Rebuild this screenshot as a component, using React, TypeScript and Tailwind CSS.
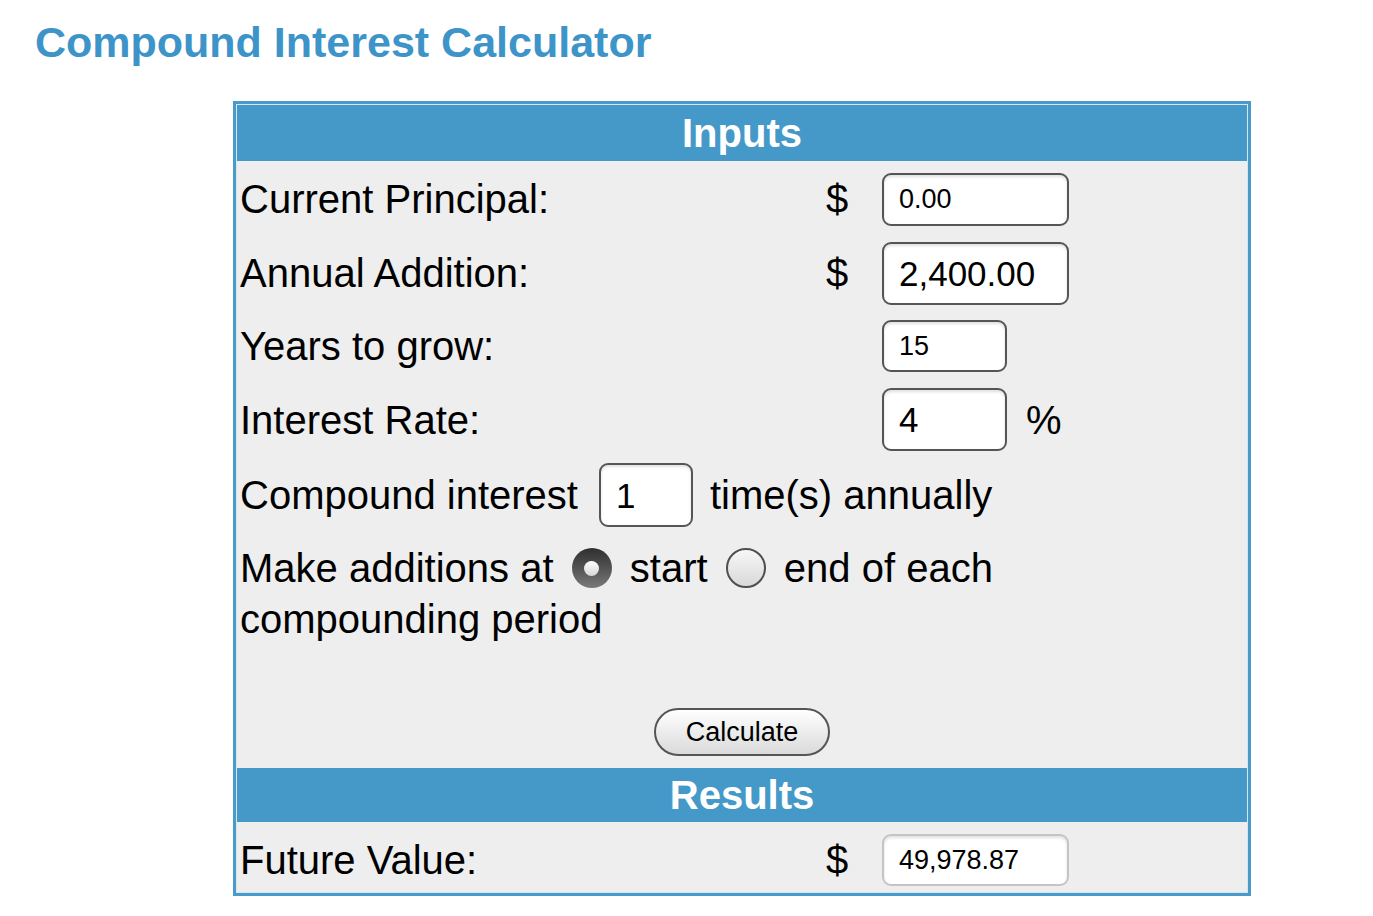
import React from 'react';

const font = { fontFamily: '"Liberation Sans", Arial, Helvetica, sans-serif' };

const Field = ({ value, w, h, big, light }: { value: string; w: string; h: string; big?: boolean; light?: boolean }) => (
  <div
    className={`${w} ${h} flex items-center pl-[15px] bg-white rounded-[9px] border-2 ${light ? 'border-[#c4c4c4]' : 'border-[#555555]'} shadow-[inset_0_2px_3px_rgba(0,0,0,0.12)] ${big ? 'text-[35px]' : 'text-[27px]'} text-black`}
  >
    {value}
  </div>
);

const Radio = ({ checked }: { checked?: boolean }) =>
  checked ? (
    <span className="inline-flex align-middle mx-[7px] mb-[6px] w-[40px] h-[40px] rounded-full bg-gradient-to-b from-[#2f2f2f] to-[#7a7a7a] items-center justify-center">
      <span className="w-[15px] h-[15px] rounded-full bg-gradient-to-b from-white to-[#d6d6d6]" />
    </span>
  ) : (
    <span className="inline-block align-middle mx-[7px] mb-[6px] w-[40px] h-[40px] rounded-full border-2 border-[#4f4f4f] bg-gradient-to-b from-[#f7f7f7] to-[#d9d9d9]" />
  );

const Row = ({ label, h, children, dollar, pct }: { label: string; h: string; children: React.ReactNode; dollar?: boolean; pct?: boolean }) => (
  <div className={`flex items-center ${h}`}>
    <div className="w-[589px] pl-[3px]">{label}</div>
    <div className="w-[56px]">{dollar ? '$' : ''}</div>
    {children}
    {pct && <div className="ml-[19px]">%</div>}
  </div>
);

export default function App() {
  return (
    <div className="min-h-screen bg-white text-black" style={font}>
      <h1 className="pl-[35px] pt-[21px] text-[43px] leading-none font-bold text-[#3d94c8]">
        Compound Interest Calculator
      </h1>

      <div className="ml-[233px] mt-[37px] w-[1018px] border-[3px] border-[#4a9bc9]">
        <div className="border border-[#d3e6f1] bg-[#eeeeee] text-[40px] leading-none">
          <div className="h-[56px] bg-[#4599c8] flex items-center justify-center text-white font-bold">
            Inputs
          </div>

          <Row label="Current Principal:" h="h-[76px]" dollar>
            <Field value="0.00" w="w-[187px]" h="h-[53px]" />
          </Row>
          <Row label="Annual Addition:" h="h-[72px]" dollar>
            <Field value="2,400.00" w="w-[187px]" h="h-[63px]" big />
          </Row>
          <Row label="Years to grow:" h="h-[74px]">
            <Field value="15" w="w-[125px]" h="h-[52px]" />
          </Row>
          <Row label="Interest Rate:" h="h-[73px]" pct>
            <Field value="4" w="w-[125px]" h="h-[63px]" big />
          </Row>

          <div className="flex items-center h-[78px] pl-[3px]">
            <span>Compound interest</span>
            <div className="ml-[21px] mr-[17px]">
              <Field value="1" w="w-[94px]" h="h-[64px]" big />
            </div>
            <span>time(s) annually</span>
          </div>

          <div className="pl-[3px] mt-[9px] leading-[51px]">
            Make additions at{' '}
            <Radio checked />{' '}
            start{' '}
            <Radio />{' '}
            end of each
            <br />
            compounding period
          </div>

          <div className="flex justify-center pt-[63px] pb-[12px]">
            <button className="w-[176px] h-[48px] rounded-full border-2 border-[#555555] bg-gradient-to-b from-white to-[#dadada] text-[27px] text-black">
              Calculate
            </button>
          </div>

          <div className="h-[54px] bg-[#4599c8] flex items-center justify-center text-white font-bold">
            Results
          </div>

          <div className="flex items-center pt-[12px] pb-[6px]">
            <div className="w-[589px] pl-[3px]">Future Value:</div>
            <div className="w-[56px]">$</div>
            <Field value="49,978.87" w="w-[187px]" h="h-[52px]" light />
          </div>
        </div>
      </div>
    </div>
  );
}
